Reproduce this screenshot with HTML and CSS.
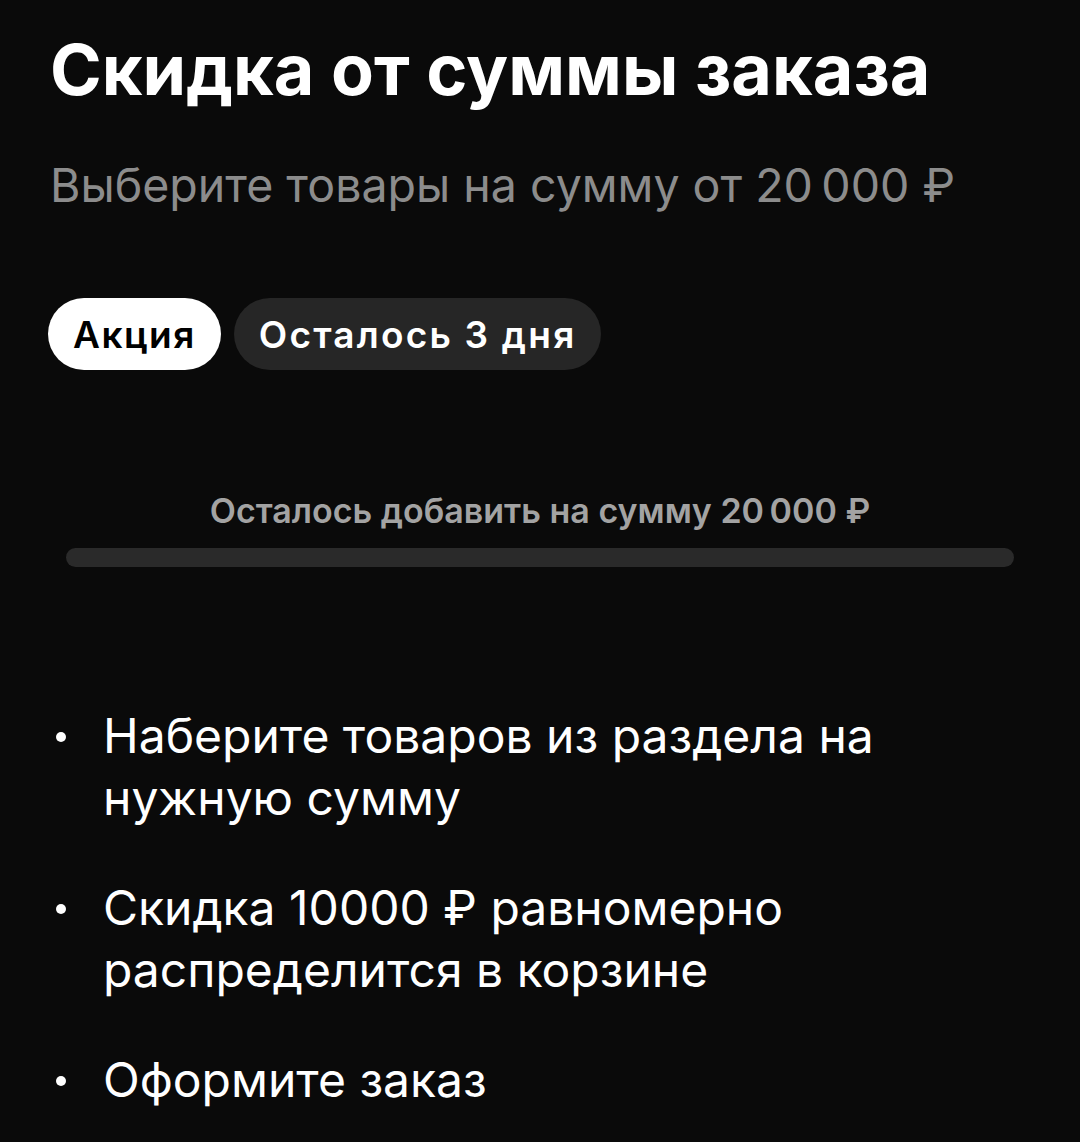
FILE: index.html
```html
<!DOCTYPE html>
<html lang="ru">
<head>
  <meta charset="UTF-8">
  <meta name="viewport" content="width=device-width, initial-scale=1.0">
  <title>Скидка от суммы заказа</title>
  <link rel="stylesheet" href="styles.css">
</head>
<body>
  <main class="promo">
    <h1 class="promo-title">Скидка от суммы заказа</h1>
    <p class="promo-subtitle">Выберите товары на сумму от 20&#8201;000&nbsp;₽</p>

    <div class="tags">
      <span class="tag tag-light">Акция</span>
      <span class="tag tag-dark">Осталось 3 дня</span>
    </div>

    <!-- Прогресс -->
    <section class="progress">
      <p class="progress-label">Осталось добавить на сумму 20&#8201;000&nbsp;₽</p>
      <div class="progress-track"><div class="progress-fill" style="width: 0%"></div></div>
    </section>

    <ul class="steps">
      <li>Наберите товаров из раздела на нужную сумму</li>
      <li>Скидка 10000 ₽ равномерно распределится в корзине</li>
      <li>Оформите заказ</li>
    </ul>
  </main>
</body>
</html>
```

FILE: styles.css
```css
:root {
  --bg-color: #0a0a0a;
  --text-color: #ffffff;
  --muted-color: #8c8c8c;
  --chip-dark: #262626;
  --track-color: #2a2a2a;
}

body {
  margin: 0;
  background-color: var(--bg-color);
  color: var(--text-color);
  font-family: 'Inter', 'Roboto', sans-serif;
}

.promo {
  padding: 26px 50px 0 50px;
}

/* Заголовок */
.promo-title {
  margin: 0;
  font-size: 70px;
  font-weight: 700;
  line-height: 88px;
}

.promo-subtitle {
  margin: 45px 0 0 0;
  font-size: 46.5px;
  line-height: 52px;
  color: var(--muted-color);
}

/* Теги */
.tags {
  display: flex;
  gap: 13px;
  margin-top: 87px;
}

.tag {
  display: inline-flex;
  align-items: center;
  height: 72px;
  padding: 0 25px;
  border-radius: 36px;
  font-size: 37px;
  font-weight: 600;
  letter-spacing: 1.5px;
}

.tag-light {
  background-color: #ffffff;
  color: #000000;
  margin-left: -2px;
}

.tag-dark {
  background-color: var(--chip-dark);
  color: var(--text-color);
  letter-spacing: 2.2px;
}

/* Прогресс */
.progress {
  margin-top: 121px;
  padding: 0 16px;
}

.progress-label {
  margin: 0;
  text-align: center;
  font-size: 34px;
  font-weight: 600;
  line-height: 40px;
  color: #a3a3a3;
}

.progress-track {
  margin-top: 17px;
  height: 19px;
  border-radius: 10px;
  background-color: var(--track-color);
  overflow: hidden;
}

.progress-fill {
  height: 100%;
  background-color: #ffffff;
}

/* Шаги */
.steps {
  list-style: none;
  margin: 138px 0 0 0;
  padding: 0;
  display: flex;
  flex-direction: column;
  gap: 48px;
}

.steps li {
  position: relative;
  padding-left: 53px;
  font-size: 48px;
  line-height: 62px;
  padding-right: 100px;
}

.steps li::before {
  content: "";
  position: absolute;
  left: 6px;
  top: 27px;
  width: 10px;
  height: 10px;
  border-radius: 50%;
  background-color: var(--text-color);
}
```
